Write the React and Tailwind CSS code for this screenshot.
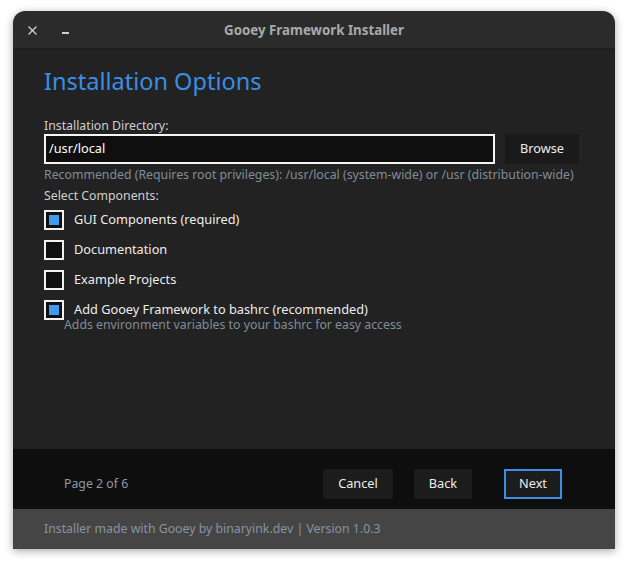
import React from "react";

const font = { fontFamily: '"Noto Sans", "Open Sans", sans-serif' };

function Check({ checked, label }) {
  return (
    <div className="flex items-center h-[20px]">
      <div className="w-[20px] h-[20px] border-2 border-[#f2f2f2] bg-[#0f0f0f] flex items-center justify-center shrink-0">
        {checked && <div className="w-[10px] h-[10px] bg-[#3d9bf0]" />}
      </div>
      <span className="ml-[10px] pb-[2px] text-[12.75px] leading-[14px] text-[#ececec]">{label}</span>
    </div>
  );
}

export default function App() {
  return (
    <div className="w-[628px] h-[566px] bg-white pt-[11px] pl-[13px]" style={font}>
      <div className="w-[602px] h-[538px] rounded-t-[12px] overflow-hidden flex flex-col shadow-[0_2px_8px_rgba(0,0,0,0.35)]">
        <div className="h-[38px] bg-[#2b2b2b] border-b border-[#1c1c1c] flex items-center relative shrink-0">
          <svg className="absolute left-[15px] top-[15px]" width="9" height="9" viewBox="0 0 9 9">
            <path d="M0.5 0.5 L8.5 8.5 M8.5 0.5 L0.5 8.5" stroke="#cfcfcf" strokeWidth="1.3" fill="none" />
          </svg>
          <span className="absolute left-[49px] top-[21px] w-[7px] h-[1.5px] bg-[#cfcfcf]" />
          <div className="w-full text-center text-[13.3px] font-bold text-[#a9a9a9] pt-[2px]">Gooey Framework Installer</div>
        </div>
        <div className="flex-1 bg-[#222222] pl-[31px] pr-[36px] pt-[16px]">
          <div className="text-[23.5px] leading-[32px] text-[#3a8ee6]">Installation Options</div>
          <div className="mt-[21px] text-[12.3px] leading-[16px] text-[#cfcfcf]">Installation Directory:</div>
          <div className="flex h-[30px]">
            <div className="flex-1 border-2 border-[#f5f5f5] bg-[#0f0f0f] text-[12.75px] text-white pl-[3px] flex items-center">/usr/local</div>
            <div className="w-[74px] ml-[10px] bg-[#1a1a1a] text-[12.75px] text-[#ececec] flex items-center justify-center">Browse</div>
          </div>
          <div className="mt-[1px] text-[12.3px] leading-[20px] text-[#7f8d99]">Recommended (Requires root privileges): /usr/local (system-wide) or /usr (distribution-wide)</div>
          <div className="mt-[3px] text-[12.3px] leading-[16px] text-[#cfcfcf]">Select Components:</div>
          <div className="mt-[6px] flex flex-col gap-[10px]">
            <Check checked label="GUI Components (required)" />
            <Check label="Documentation" />
            <Check label="Example Projects" />
            <Check checked label="Add Gooey Framework to bashrc (recommended)" />
          </div>
          <div className="-mt-[1px] ml-[20px] text-[12.3px] leading-[12px] text-[#7f8d99]">Adds environment variables to your bashrc for easy access</div>
        </div>
        <div className="h-[60px] bg-[#0e0e0e] flex items-center pt-[10px] shrink-0">
          <div className="ml-[51px] text-[12.3px] text-[#8d9aa6]">Page 2 of 6</div>
          <div className="ml-auto flex items-center mr-[53px]">
            <div className="w-[70px] h-[30px] bg-[#1c1c1c] rounded-[2px] flex items-center justify-center text-[12.75px] text-[#ececec]">Cancel</div>
            <div className="ml-[21px] w-[58px] h-[30px] bg-[#1c1c1c] rounded-[2px] flex items-center justify-center text-[12.75px] text-[#ececec]">Back</div>
            <div className="ml-[32px] w-[58px] h-[30px] bg-[#1c1c1c] border-2 border-[#3d8ee6] flex items-center justify-center text-[12.75px] text-[#ececec]">Next</div>
          </div>
        </div>
        <div className="h-[40px] bg-[#454545] flex items-center pl-[31px] shrink-0">
          <span className="text-[12.3px] text-[#8694a0]">Installer made with Gooey by binaryink.dev | Version 1.0.3</span>
        </div>
      </div>
    </div>
  );
}
